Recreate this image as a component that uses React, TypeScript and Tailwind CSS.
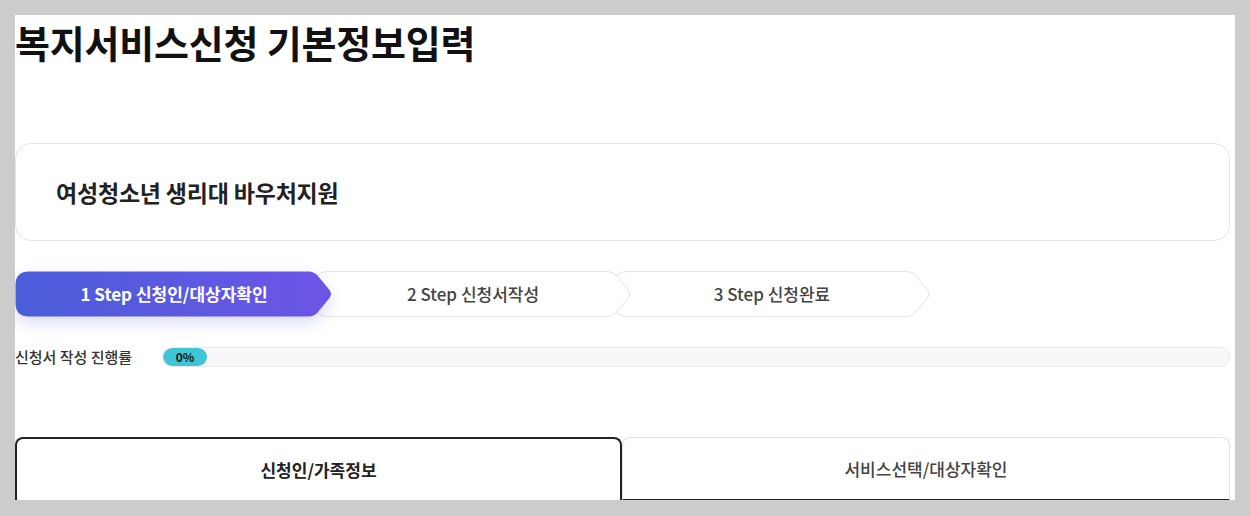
import React from 'react';

const FONT = { fontFamily: '"Noto Sans CJK KR", "Noto Sans", sans-serif' };

type StepProps = {
  label: string;
  active?: boolean;
  z: string;
  first?: boolean;
};

const StepArrow: React.FC<StepProps> = ({ label, active, z, first }) => {
  // pentagon shape: rounded left side, pointed right side
  const d =
    'M 14 0.5 H 294 Q 299 0.5 303 5 L 314.5 19 Q 317.5 23 314.5 27 L 303 41 Q 299 45.5 294 45.5 H 14 Q 0.5 45.5 0.5 32 V 14 Q 0.5 0.5 14 0.5 Z';
  return (
    <div
      className={`relative ${z} w-[318px] h-[46px] shrink-0 flex items-center justify-center ${first ? '' : '-ml-[19px]'}`}
    >
      <svg
        className={`absolute inset-0 ${active ? 'drop-shadow-[0_6px_8px_rgba(90,90,210,0.22)]' : ''}`}
        width="318"
        height="46"
        viewBox="0 0 318 46"
      >
        <defs>
          <linearGradient id="stepGrad" x1="0" y1="0" x2="1" y2="0">
            <stop offset="0" stopColor="#4a5dd9" />
            <stop offset="1" stopColor="#6c55e6" />
          </linearGradient>
        </defs>
        {active ? (
          <path d={d} fill="url(#stepGrad)" />
        ) : (
          <path d={d} fill="#ffffff" stroke="#e4e3ea" strokeWidth="1" />
        )}
      </svg>
      <span
        className={`relative text-[17px] ${active ? 'text-white font-bold' : 'text-[#444444] font-medium'}`}
      >
        {label}
      </span>
    </div>
  );
};

export default function App() {
  return (
    <div className="w-[1250px] h-[516px] bg-[#cccccc] p-[15px] overflow-hidden" style={FONT}>
      <div className="w-[1220px] h-[485px] bg-white overflow-hidden">
        <div className="w-[1215px]">
          {/* Title */}
          <h1 className="text-[38px] leading-[54px] font-bold text-[#111111] tracking-[-0.2px] whitespace-nowrap">
            복지서비스신청 기본정보입력
          </h1>

          {/* Service card */}
          <div className="mt-[74px] h-[98px] border border-[#e3e2e8] rounded-[16px] flex items-center pl-[40px]">
            <span className="text-[23px] font-bold text-[#222222] tracking-[-0.2px]">
              여성청소년 생리대 바우처지원
            </span>
          </div>

          {/* Steps */}
          <div className="mt-[30px] flex">
            <StepArrow label="1 Step 신청인/대상자확인" active z="z-30" first />
            <StepArrow label="2 Step 신청서작성" z="z-20" />
            <StepArrow label="3 Step 신청완료" z="z-10" />
          </div>

          {/* Progress */}
          <div className="mt-[30px] flex items-center h-[20px]">
            <div className="w-[147px] text-[15px] font-medium text-[#333333]">
              신청서 작성 진행률
            </div>
            <div className="flex-1 h-[20px] rounded-full bg-[#f8f8fa] border border-[#ebeaf0] overflow-hidden">
              <div className="w-[44px] h-full rounded-full bg-[#3ec6d6] flex items-center justify-center text-[12px] font-bold text-[#111111]">
                0%
              </div>
            </div>
          </div>

          {/* Tabs */}
          <div className="mt-[70px] flex">
            <div className="w-[607px] h-[64px] border-2 border-b-0 border-[#222222] rounded-t-[8px] flex items-center justify-center text-[17px] font-bold text-[#222222]">
              신청인/가족정보
            </div>
            <div className="flex-1 h-[64px] border border-[#e2e2e8] border-b-2 border-b-[#222222] rounded-t-[8px] flex items-center justify-center text-[17px] font-medium text-[#444444]">
              서비스선택/대상자확인
            </div>
          </div>
        </div>
      </div>
    </div>
  );
}
